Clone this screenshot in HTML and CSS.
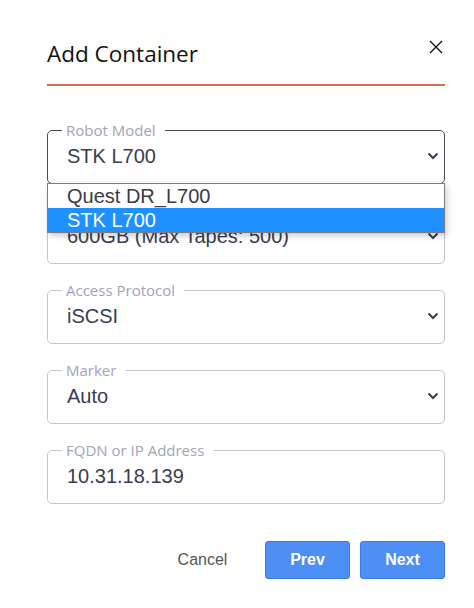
FILE: index.html
```html
<!DOCTYPE html>
<html lang="en">
<head>
  <meta charset="UTF-8" />
  <meta name="viewport" content="width=device-width, initial-scale=1.0"/>
  <title>Add Container</title>
  <link rel="stylesheet" href="styles.css">
</head>
<body>

  <div class="dialog">
    <header class="dialog-header">
      <h1>Add Container</h1>
      <button type="button" class="close-btn" aria-label="Close">
        <svg width="14" height="14" viewBox="0 0 14 14">
          <path d="M1 1 L13 13 M13 1 L1 13" stroke="#111" stroke-width="1.4" fill="none"/>
        </svg>
      </button>
    </header>

    <form class="dialog-body">
      <div class="select-wrap">
        <fieldset class="field focused">
          <legend>Robot Model</legend>
          <div class="value">
            <span>STK L700</span>
            <svg class="chevron" width="12" height="8" viewBox="0 0 12 8">
              <path d="M1.5 1.5 L6 6 L10.5 1.5" stroke="#3c3c50" stroke-width="2" fill="none"/>
            </svg>
          </div>
        </fieldset>
        <ul class="options">
          <li>Quest DR_L700</li>
          <li class="selected">STK L700</li>
        </ul>
      </div>

      <fieldset class="field">
        <legend>Tape Capacity</legend>
        <div class="value">
          <span>600GB (Max Tapes: 500)</span>
          <svg class="chevron" width="12" height="8" viewBox="0 0 12 8">
            <path d="M1.5 1.5 L6 6 L10.5 1.5" stroke="#3c3c50" stroke-width="2" fill="none"/>
          </svg>
        </div>
      </fieldset>

      <fieldset class="field">
        <legend>Access Protocol</legend>
        <div class="value">
          <span>iSCSI</span>
          <svg class="chevron" width="12" height="8" viewBox="0 0 12 8">
            <path d="M1.5 1.5 L6 6 L10.5 1.5" stroke="#3c3c50" stroke-width="2" fill="none"/>
          </svg>
        </div>
      </fieldset>

      <fieldset class="field">
        <legend>Marker</legend>
        <div class="value">
          <span>Auto</span>
          <svg class="chevron" width="12" height="8" viewBox="0 0 12 8">
            <path d="M1.5 1.5 L6 6 L10.5 1.5" stroke="#3c3c50" stroke-width="2" fill="none"/>
          </svg>
        </div>
      </fieldset>

      <fieldset class="field">
        <legend>FQDN or IP Address</legend>
        <div class="value">
          <span>10.31.18.139</span>
        </div>
      </fieldset>
    </form>

    <footer class="dialog-footer">
      <button type="button" class="cancel-btn">Cancel</button>
      <button type="button" class="primary-btn">Prev</button>
      <button type="button" class="primary-btn">Next</button>
    </footer>
  </div>

</body>
</html>
```

FILE: styles.css
```css
:root {
  --accent: #d4704f;
  --primary: #4d8ff5;
  --text: #3c3c50;
  --legend: #a3a3b8;
  --border: #c6c6cf;
}

* {
  box-sizing: border-box;
  margin: 0;
  padding: 0;
}

body {
  background: #fff;
  font-family: "Liberation Sans", Arial, sans-serif;
  color: var(--text);
}

.dialog {
  padding: 39px 29px 0 47px;
}

.dialog-header {
  display: flex;
  justify-content: space-between;
  align-items: flex-start;
  padding-bottom: 15px;
  border-bottom: 2px solid var(--accent);
}

.dialog-header h1 {
  font-family: "Open Sans", sans-serif;
  font-size: 22.5px;
  font-weight: 500;
  line-height: 30px;
  color: #111;
}

.close-btn {
  background: none;
  border: none;
  margin-top: 1px;
  margin-right: 2px;
  cursor: pointer;
  line-height: 0;
}

.dialog-body {
  display: flex;
  flex-direction: column;
  gap: 17px;
  padding-top: 35px;
}

.select-wrap {
  position: relative;
}

.field {
  border: 1px solid var(--border);
  border-radius: 5px;
  padding: 0 5px 0 14px;
}

.field.focused {
  border-color: #4a4a55;
}

.field legend {
  font-family: "Open Sans", sans-serif;
  font-size: 15px;
  line-height: 18px;
  color: var(--legend);
  padding: 0 9px 0 4px;
}

.value {
  display: flex;
  align-items: center;
  height: 44px;
  padding: 5px 0 15px 5px;
  font-size: 20px;
  line-height: 24px;
}

.chevron {
  margin-left: auto;
}

.options {
  position: absolute;
  top: calc(100% - 1px);
  left: 0;
  right: 0;
  list-style: none;
  background: #fff;
  border: 1px solid #7a7a80;
  box-shadow: 2px 3px 6px rgba(0, 0, 0, 0.2);
  z-index: 2;
}

.options li {
  font-size: 20px;
  line-height: 24px;
  padding-left: 19px;
  color: #3c3c44;
}

.options li.selected {
  background: #1e90ff;
  color: #fff;
}

.dialog-footer {
  display: flex;
  justify-content: flex-end;
  gap: 10px;
  padding-top: 37px;
}

.dialog-footer button {
  width: 85px;
  height: 38px;
  font-family: "Liberation Sans", Arial, sans-serif;
  font-size: 16px;
  border-radius: 3px;
  cursor: pointer;
}

.cancel-btn {
  background: none;
  border: none;
  color: #555;
  margin-right: 10px;
}

.primary-btn {
  background: var(--primary);
  border: 1px solid #3b7de0;
  color: #fff;
  font-weight: bold;
}
```
